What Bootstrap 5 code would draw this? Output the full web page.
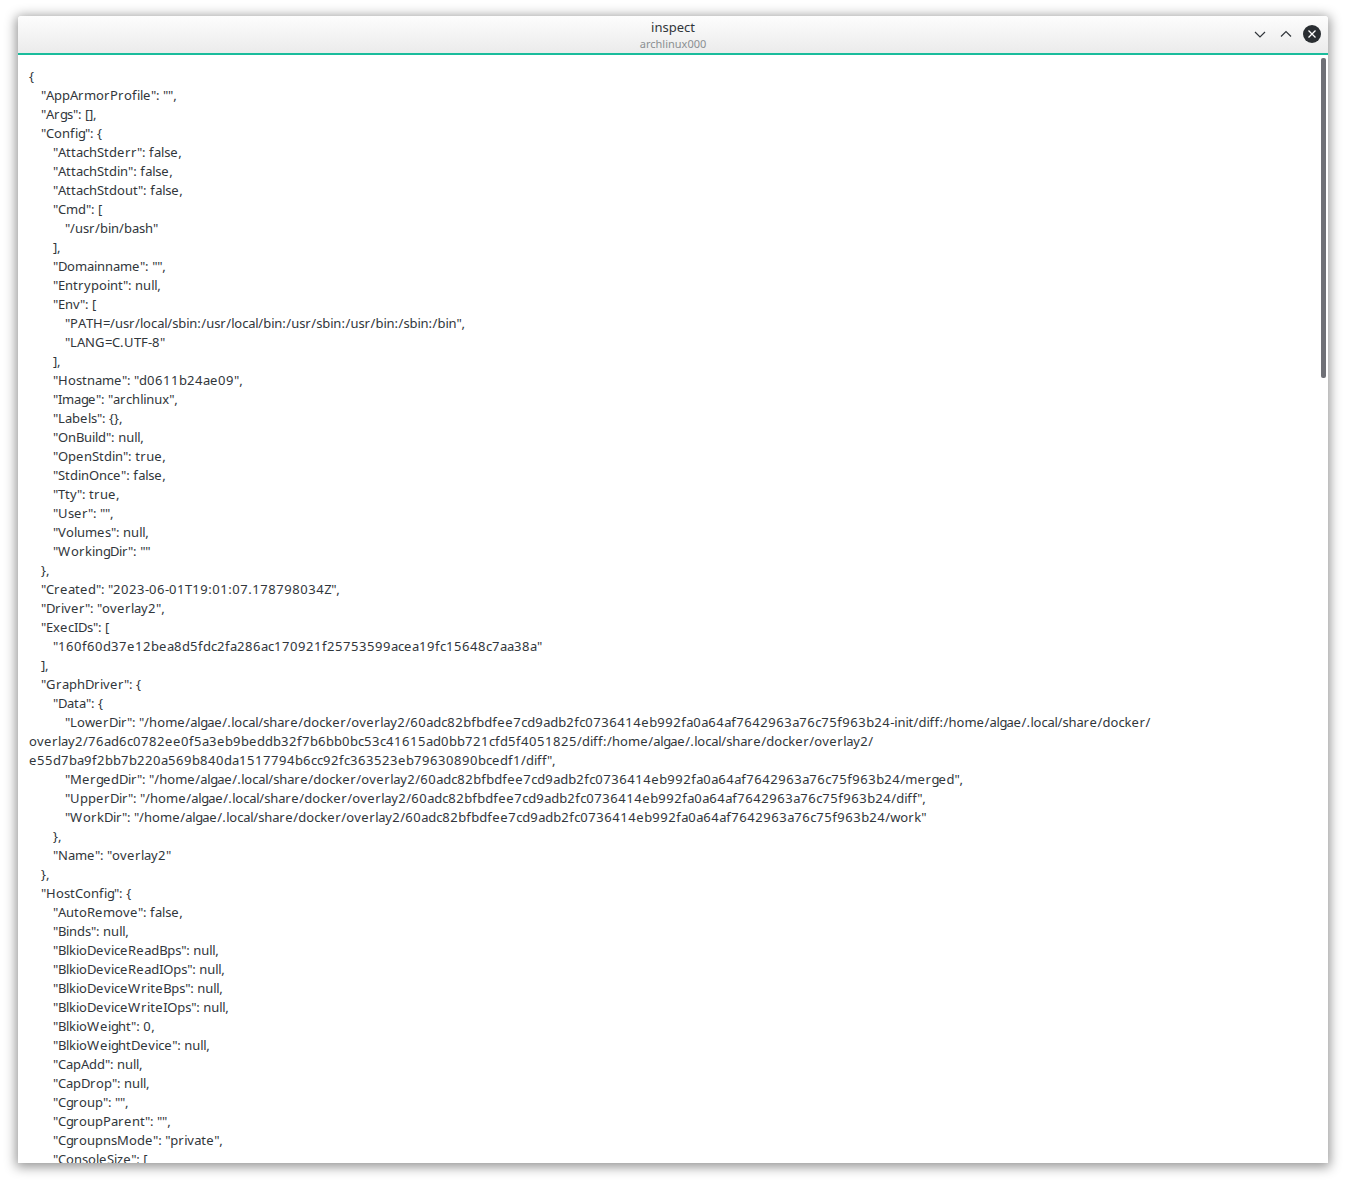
<!DOCTYPE html>
<html lang="en">
<head>
<meta charset="utf-8">
<title>inspect</title>
<link href="https://cdn.jsdelivr.net/npm/bootstrap@5.3.0/dist/css/bootstrap.min.css" rel="stylesheet">
<style>
html, body { height: 1184px; overflow: hidden; background: #fff; }
.app-window { margin: 16px 18px 0; width: 1310px; height: 1147px; border-radius: 3px 3px 0 0; box-shadow: 0 2px 12px 2px rgba(0,0,0,.42); background: #fff; font-family: "Noto Sans", sans-serif; color: #31363b; }
.app-header { height: 39px; flex: none; background: linear-gradient(#fdfdfd, #ebebeb); border-bottom: 2px solid #1abc9c; border-radius: 3px 3px 0 0; }
.app-title { font-size: 13px; line-height: 16px; margin-top: 3px; color: #31363b; }
.app-sub { font-size: 11px; line-height: 14px; margin-top: 2px; color: #8b8f92; }
.app-controls { right: 7px; top: 9px; }
.app-json { margin: 0; padding: 12px 11px 0; font-family: "Noto Sans", sans-serif; font-size: 13px; line-height: 19px; white-space: pre-wrap; tab-size: 12px; color: #31363b; overflow: hidden; font-kerning: none; }
.app-scroll { right: 2px; top: 42px; width: 5px; height: 320px; background: #6f7076; border-radius: 2px; }
</style>
</head>
<body>
<div class="app-window d-flex flex-column position-relative overflow-hidden">
  <div class="app-header position-relative text-center">
    <div class="app-title">inspect</div>
    <div class="app-sub">archlinux000</div>
    <div class="app-controls position-absolute d-flex align-items-center gap-2">
      <svg width="18" height="18" viewBox="0 0 18 18" fill="none" stroke="#31363b" stroke-width="1.2"><path d="M4 7l5 5 5-5"/></svg>
      <svg width="18" height="18" viewBox="0 0 18 18" fill="none" stroke="#31363b" stroke-width="1.2"><path d="M4 11.500l5-5 5 5"/></svg>
      <svg width="18" height="18" viewBox="0 0 18 18"><circle cx="9" cy="9" r="9" fill="#2a2e32"/><path d="M5.500 5.500l7 7M12.500 5.500l-7 7" stroke="#fff" stroke-width="1.300"/></svg>
    </div>
  </div>
  <pre class="app-json flex-grow-1" id="jsonText">{
	"AppArmorProfile": "",
	"Args": [],
	"Config": {
		"AttachStderr": false,
		"AttachStdin": false,
		"AttachStdout": false,
		"Cmd": [
			"/usr/bin/bash"
		],
		"Domainname": "",
		"Entrypoint": null,
		"Env": [
			"PATH=/usr/local/sbin:/usr/local/bin:/usr/sbin:/usr/bin:/sbin:/bin",
			"LANG=C.UTF-8"
		],
		"Hostname": "d0611b24ae09",
		"Image": "archlinux",
		"Labels": {},
		"OnBuild": null,
		"OpenStdin": true,
		"StdinOnce": false,
		"Tty": true,
		"User": "",
		"Volumes": null,
		"WorkingDir": ""
	},
	"Created": "2023-06-01T19:01:07.178798034Z",
	"Driver": "overlay2",
	"ExecIDs": [
		"160f60d37e12bea8d5fdc2fa286ac170921f25753599acea19fc15648c7aa38a"
	],
	"GraphDriver": {
		"Data": {
			"LowerDir": "/home/algae/.local/share/docker/overlay2/60adc82bfbdfee7cd9adb2fc0736414eb992fa0a64af7642963a76c75f963b24-init/diff:/home/algae/.local/share/docker/
overlay2/76ad6c0782ee0f5a3eb9beddb32f7b6bb0bc53c41615ad0bb721cfd5f4051825/diff:/home/algae/.local/share/docker/overlay2/
e55d7ba9f2bb7b220a569b840da1517794b6cc92fc363523eb79630890bcedf1/diff",
			"MergedDir": "/home/algae/.local/share/docker/overlay2/60adc82bfbdfee7cd9adb2fc0736414eb992fa0a64af7642963a76c75f963b24/merged",
			"UpperDir": "/home/algae/.local/share/docker/overlay2/60adc82bfbdfee7cd9adb2fc0736414eb992fa0a64af7642963a76c75f963b24/diff",
			"WorkDir": "/home/algae/.local/share/docker/overlay2/60adc82bfbdfee7cd9adb2fc0736414eb992fa0a64af7642963a76c75f963b24/work"
		},
		"Name": "overlay2"
	},
	"HostConfig": {
		"AutoRemove": false,
		"Binds": null,
		"BlkioDeviceReadBps": null,
		"BlkioDeviceReadIOps": null,
		"BlkioDeviceWriteBps": null,
		"BlkioDeviceWriteIOps": null,
		"BlkioWeight": 0,
		"BlkioWeightDevice": null,
		"CapAdd": null,
		"CapDrop": null,
		"Cgroup": "",
		"CgroupParent": "",
		"CgroupnsMode": "private",
		"ConsoleSize": [</pre>
  <div class="app-scroll position-absolute"></div>
</div>
<script src="https://cdn.jsdelivr.net/npm/bootstrap@5.3.0/dist/js/bootstrap.bundle.min.js"></script>
<script>
/* The reference uses whole-pixel glyph advances: set each character's advance to its hinted width. */
(function () {
  var pre = document.getElementById('jsonText');
  var text = pre.textContent;
  var ctx = document.createElement('canvas').getContext('2d');
  ctx.font = '13px "Noto Sans"';
  var hinted = { r: 6, e: 8, f: 5, g: 7, G: 10, W: 13, ':': 4, '.': 4 };
  function delta(ch) {
    if (ch === '\n' || ch === '\t') return 0;
    var w = ctx.measureText(ch).width;
    var target = /[0-9]/.test(ch) ? 8 : (hinted[ch] || Math.round(w));
    return +(target - w).toFixed(3);
  }
  pre.textContent = '';
  var i = 0;
  while (i < text.length) {
    var d = delta(text[i]), j = i + 1;
    while (j < text.length && delta(text[j]) === d) j++;
    var s = document.createElement('span');
    s.style.letterSpacing = d + 'px';
    s.textContent = text.slice(i, j);
    pre.appendChild(s);
    i = j;
  }
})();
</script>
</body>
</html>
